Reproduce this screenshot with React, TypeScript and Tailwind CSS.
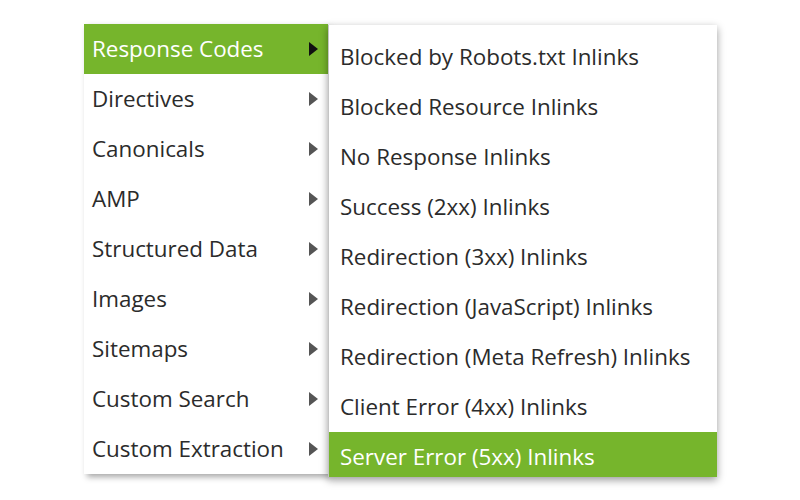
const mainItems = [
  "Response Codes",
  "Directives",
  "Canonicals",
  "AMP",
  "Structured Data",
  "Images",
  "Sitemaps",
  "Custom Search",
  "Custom Extraction",
];

const subItems = [
  "Blocked by Robots.txt Inlinks",
  "Blocked Resource Inlinks",
  "No Response Inlinks",
  "Success (2xx) Inlinks",
  "Redirection (3xx) Inlinks",
  "Redirection (JavaScript) Inlinks",
  "Redirection (Meta Refresh) Inlinks",
  "Client Error (4xx) Inlinks",
  "Server Error (5xx) Inlinks",
];

// little filled triangle used as the submenu arrow
const Arrow = ({ active }: { active: boolean }) => (
  <svg width="9" height="14" viewBox="0 0 9 14" className="shrink-0">
    <path d="M0 0 L9 7 L0 14 Z" fill={active ? "#111111" : "#555555"} />
  </svg>
);

export default function App() {
  return (
    <div
      className="w-[800px] h-[500px] bg-white flex items-start"
      style={{ fontFamily: '"Open Sans", "Noto Sans", sans-serif' }}
    >
      {/* Main menu */}
      <div className="ml-[84px] mt-[24px] w-[244px] bg-white shadow-[3px_3px_6px_rgba(0,0,0,0.35)] flex flex-col">
        {mainItems.map((label, i) => (
          <div
            key={label}
            className={`h-[50px] flex items-center justify-between pl-[8px] pr-[10px] text-[22.4px] ${
              i === 0 ? "bg-[#76b52c] text-white" : "text-[#2b2b2b]"
            }`}
          >
            <span>{label}</span>
            <Arrow active={i === 0} />
          </div>
        ))}
      </div>

      {/* Submenu */}
      <div className="mt-[25px] w-[389px] h-[452px] bg-white border-l border-[#c4c4c4] shadow-[0_3px_8px_rgba(0,0,0,0.4)] flex flex-col pt-[7px] overflow-hidden">
        {subItems.map((label, i) => (
          <div
            key={label}
            className={`shrink-0 h-[50px] flex items-center pl-[11px] text-[22.4px] ${
              i === subItems.length - 1 ? "bg-[#76b52c] text-white" : "text-[#2b2b2b]"
            }`}
          >
            {label}
          </div>
        ))}
      </div>
    </div>
  );
}
